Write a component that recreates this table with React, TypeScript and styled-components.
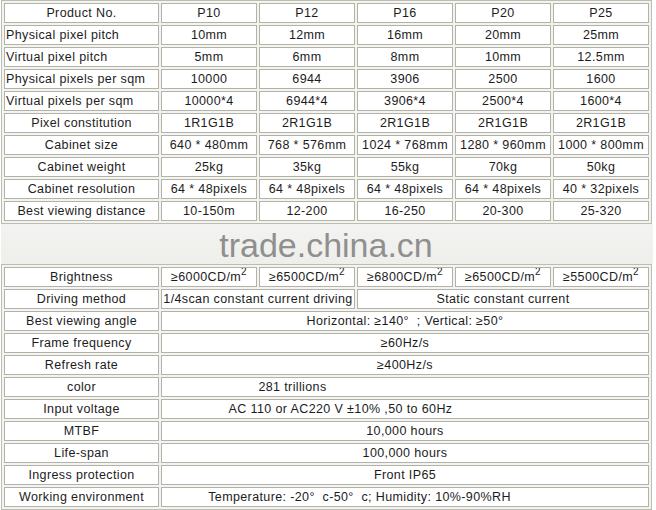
import React from "react";
import styled, { createGlobalStyle } from "styled-components";

const Global = createGlobalStyle`
  html, body { margin: 0; padding: 0; background: #ffffff; }
  body { font-family: "Liberation Sans", Arial, sans-serif; }
`;

const Page = styled.div`
  width: 656px;
  height: 510px;
  overflow: hidden;
  padding: 0 0 0 1px;
  box-sizing: border-box;
`;

const Table = styled.table`
  width: 651px;
  table-layout: fixed;
  border-collapse: separate;
  border-spacing: 2px;
  border: 1px solid #bdbdb5;
  background: #f4f4ef;
  font-size: 12.5px;
  letter-spacing: 0.38px;
  color: #1c1c1c;
`;

const Cell = styled.td<{ $left?: boolean; $shift?: number }>`
  height: 18px;
  padding: 0 ${(p) => (p.$shift ? p.$shift : 1)}px 0 1px;
  border: 1px solid #b2b2aa;
  background: #ffffff;
  text-align: ${(p) => (p.$left ? "left" : "center")};
  white-space: nowrap;
  overflow: hidden;
  line-height: 18px;
`;

const Gap = styled.div`
  height: 40px;
  width: 652px;
  background: linear-gradient(#f3f3f1, #eeeeeb);
  display: flex;
  align-items: center;
  justify-content: center;
  padding-right: 2px;
  box-sizing: border-box;
`;

const Watermark = styled.span`
  font-family: "Liberation Sans", Arial, sans-serif;
  font-size: 34px;
  color: #8f8f8f;
  line-height: 40px;
  margin-top: 2px;
`;

const Sup = styled.sup`
  font-size: 10px;
  line-height: 0;
  vertical-align: 6px;
`;

const Cols = () => (
  <colgroup>
    <col style={{ width: 155 }} />
    <col style={{ width: 96 }} />
    <col style={{ width: 96 }} />
    <col style={{ width: 96 }} />
    <col style={{ width: 96 }} />
    <col style={{ width: 96 }} />
  </colgroup>
);

type Row = { label: string; left?: boolean; values: string[] };

const topRows: Row[] = [
  { label: "Product No.", values: ["P10", "P12", "P16", "P20", "P25"] },
  { label: "Physical pixel pitch", left: true, values: ["10mm", "12mm", "16mm", "20mm", "25mm"] },
  { label: "Virtual pixel pitch", left: true, values: ["5mm", "6mm", "8mm", "10mm", "12.5mm"] },
  { label: "Physical pixels per sqm", left: true, values: ["10000", "6944", "3906", "2500", "1600"] },
  { label: "Virtual pixels per sqm", left: true, values: ["10000*4", "6944*4", "3906*4", "2500*4", "1600*4"] },
  { label: "Pixel constitution", values: ["1R1G1B", "2R1G1B", "2R1G1B", "2R1G1B", "2R1G1B"] },
  { label: "Cabinet size", values: ["640 * 480mm", "768 * 576mm", "1024 * 768mm", "1280 * 960mm", "1000 * 800mm"] },
  { label: "Cabinet weight", values: ["25kg", "35kg", "55kg", "70kg", "50kg"] },
  { label: "Cabinet resolution", values: ["64 * 48pixels", "64 * 48pixels", "64 * 48pixels", "64 * 48pixels", "40 * 32pixels"] },
  { label: "Best viewing distance", values: ["10-150m", "12-200", "16-250", "20-300", "25-320"] },
];

const brightness = ["6000", "6500", "6800", "6500", "5500"];

const spanRows: { label: string; value: string; shift?: number }[] = [
  { label: "Best viewing angle", value: "Horizontal: ≥140°\u00a0\u00a0; Vertical: ≥50°" },
  { label: "Frame frequency", value: "≥60Hz/s" },
  { label: "Refresh rate", value: "≥400Hz/s" },
  { label: "color", value: "281 trillions", shift: 226 },
  { label: "Input voltage", value: "AC 110 or AC220 V ±10% ,50 to 60Hz", shift: 130 },
  { label: "MTBF", value: "10,000 hours" },
  { label: "Life-span", value: "100,000 hours" },
  { label: "Ingress protection", value: "Front IP65" },
  { label: "Working environment", value: "Temperature: -20°\u00a0\u00a0c-50°\u00a0\u00a0c; Humidity: 10%-90%RH", shift: 92 },
];

export default function App() {
  return (
    <Page>
      <Global />
      <Table>
        <Cols />
        <tbody>
          {topRows.map((r) => (
            <tr key={r.label}>
              <Cell $left={r.left}>{r.label}</Cell>
              {r.values.map((v, i) => (
                <Cell key={i}>{v}</Cell>
              ))}
            </tr>
          ))}
        </tbody>
      </Table>
      <Gap>
        <Watermark>trade.china.cn</Watermark>
      </Gap>
      <Table>
        <Cols />
        <tbody>
          <tr>
            <Cell>Brightness</Cell>
            {brightness.map((b, i) => (
              <Cell key={i}>
                ≥{b}CD/m<Sup>2</Sup>
              </Cell>
            ))}
          </tr>
          <tr>
            <Cell>Driving method</Cell>
            <Cell colSpan={2}>1/4scan constant current driving</Cell>
            <Cell colSpan={3}>Static constant current</Cell>
          </tr>
          {spanRows.map((r) => (
            <tr key={r.label}>
              <Cell>{r.label}</Cell>
              <Cell colSpan={5} $shift={r.shift}>
                {r.value}
              </Cell>
            </tr>
          ))}
        </tbody>
      </Table>
    </Page>
  );
}
